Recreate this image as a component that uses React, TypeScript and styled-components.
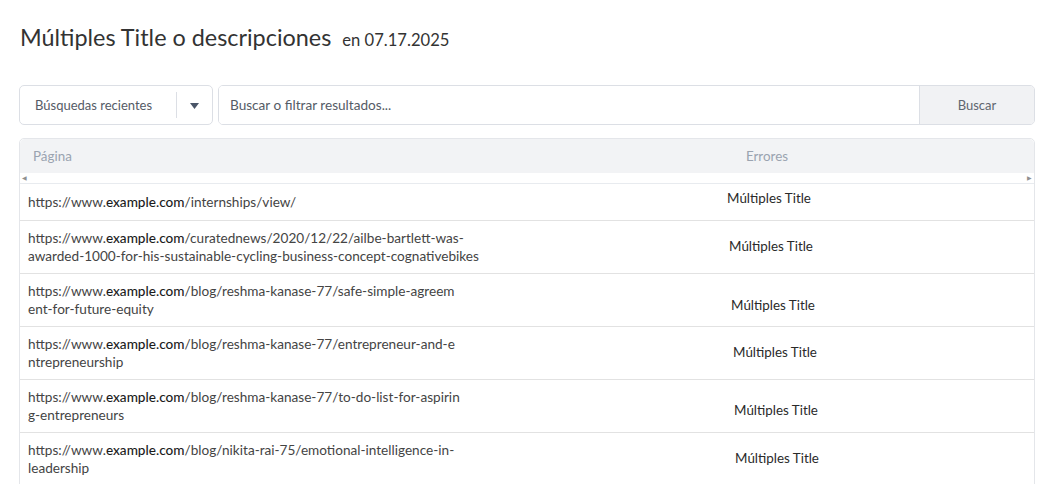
import { createGlobalStyle, styled } from "styled-components";

const rows = [
  { path: "/internships/view/", dx: -1, dy: -4, short: true },
  { path: "/curatednews/2020/12/22/ailbe-bartlett-was-\nawarded-1000-for-his-sustainable-cycling-business-concept-cognativebikes", dx: 1, dy: -1 },
  { path: "/blog/reshma-kanase-77/safe-simple-agreem\nent-for-future-equity", dx: 3, dy: 5 },
  { path: "/blog/reshma-kanase-77/entrepreneur-and-e\nntrepreneurship", dx: 5, dy: -1 },
  { path: "/blog/reshma-kanase-77/to-do-list-for-aspirin\ng-entrepreneurs", dx: 6, dy: 4 },
  { path: "/blog/nikita-rai-75/emotional-intelligence-in-\nleadership", dx: 7, dy: -1 },
];

const App = () => {
  return (
    <Page>
      <GlobalStyle />
      <Heading>
        <Title>Múltiples Title o descripciones</Title>
        <DateLabel>en 07.17.2025</DateLabel>
      </Heading>

      <SearchBar>
        <Dropdown>
          <DropdownLabel>Búsquedas recientes</DropdownLabel>
          <DropdownToggle>
            <svg width="9" height="6" viewBox="0 0 9 6">
              <path d="M0 0h9L4.5 6z" fill="#4a5568" />
            </svg>
          </DropdownToggle>
        </Dropdown>
        <SearchGroup>
          <SearchInput placeholder="Buscar o filtrar resultados..." />
          <SearchButton>Buscar</SearchButton>
        </SearchGroup>
      </SearchBar>

      <Table>
        <HeaderRow>
          <HeadCell>Página</HeadCell>
          <HeadCell $center>Errores</HeadCell>
        </HeaderRow>
        <ScrollStrip>
          <Arrow>◀</Arrow>
          <Arrow>▶</Arrow>
        </ScrollStrip>
        {rows.map((row) => (
          <Row key={row.path} $short={row.short}>
            <UrlCell>
              https://www.<Domain>example.com</Domain>
              {row.path}
            </UrlCell>
            <ErrorCell style={{ transform: `translate(${row.dx}px, ${row.dy}px)` }}>
              Múltiples Title
            </ErrorCell>
          </Row>
        ))}
      </Table>
    </Page>
  );
};
export default App;

const GlobalStyle = createGlobalStyle`
  body {
    margin: 0;
    background: #ffffff;
    font-family: Lato, "Noto Sans", sans-serif;
  }
`;

const Page = styled.div`
  padding: 23px 13px 0 19px;
  width: 1048px;
  height: 484px;
  box-sizing: border-box;
  overflow: hidden;
`;

const Heading = styled.div`
  display: flex;
  align-items: baseline;
  gap: 11px;
  padding-left: 1px;
  height: 39px;
`;

const Title = styled.h1`
  margin: 0;
  font-size: 23.4px;
  font-weight: 400;
  color: #333333;
`;

const DateLabel = styled.span`
  font-size: 16.6px;
  color: #333333;
`;

const SearchBar = styled.div`
  display: flex;
  gap: 5px;
  margin-top: 23px;
  height: 40px;
`;

const Dropdown = styled.div`
  display: flex;
  align-items: center;
  width: 194px;
  box-sizing: border-box;
  border: 1px solid #dcdfe5;
  border-radius: 5px;
`;

const DropdownLabel = styled.span`
  flex: 1;
  padding-left: 15px;
  font-size: 13px;
  color: #555b66;
  line-height: 26px;
  border-right: 1px solid #dcdfe5;
`;

const DropdownToggle = styled.span`
  display: flex;
  align-items: center;
  justify-content: center;
  width: 35px;
  padding-top: 2px;
`;

const SearchGroup = styled.div`
  flex: 1;
  display: flex;
  border: 1px solid #dcdfe5;
  border-radius: 5px;
  overflow: hidden;
`;

const SearchInput = styled.input`
  flex: 1;
  border: none;
  outline: none;
  padding: 0 11px;
  font-family: inherit;
  font-size: 13.6px;
  color: #444;
  &::placeholder {
    color: #555b66;
  }
`;

const SearchButton = styled.button`
  width: 115px;
  border: none;
  border-left: 1px solid #dcdfe5;
  background: #f1f2f4;
  font-family: inherit;
  font-size: 13px;
  color: #60666f;
`;

const Table = styled.div`
  margin-top: 13px;
  border: 1px solid #e4e6ea;
  border-radius: 5px 5px 0 0;
`;

const HeaderRow = styled.div`
  display: grid;
  grid-template-columns: 1fr 400px;
  height: 34px;
  align-items: center;
  background: #f2f3f5;
  border-radius: 5px 5px 0 0;
`;

const HeadCell = styled.div<{ $center?: boolean }>`
  padding-left: ${(p) => (p.$center ? "0" : "13px")};
  padding-right: ${(p) => (p.$center ? "134px" : "0")};
  text-align: ${(p) => (p.$center ? "center" : "left")};
  font-size: 13.4px;
  color: #9aa3b0;
`;

const ScrollStrip = styled.div`
  display: flex;
  justify-content: space-between;
  align-items: center;
  height: 10px;
  padding: 0 2px;
  border-bottom: 1px solid #e8ebef;
`;

const Arrow = styled.span`
  font-size: 6px;
  color: #909090;
  line-height: 1;
`;

const Row = styled.div<{ $short?: boolean }>`
  display: grid;
  grid-template-columns: 1fr 400px;
  align-items: center;
  height: ${(p) => (p.$short ? "37px" : "53px")};
  box-sizing: border-box;
  border-bottom: 1px solid #e2e2e2;
`;

const UrlCell = styled.div`
  padding-left: 8px;
  font-size: 13.6px;
  line-height: 18px;
  color: #444444;
  white-space: pre-line;
`;

const Domain = styled.span`
  color: #1c1c1c;
  font-weight: 500;
`;

const ErrorCell = styled.div`
  padding-right: 128px;
  text-align: center;
  font-size: 13.4px;
  color: #2a2a2a;
`;
